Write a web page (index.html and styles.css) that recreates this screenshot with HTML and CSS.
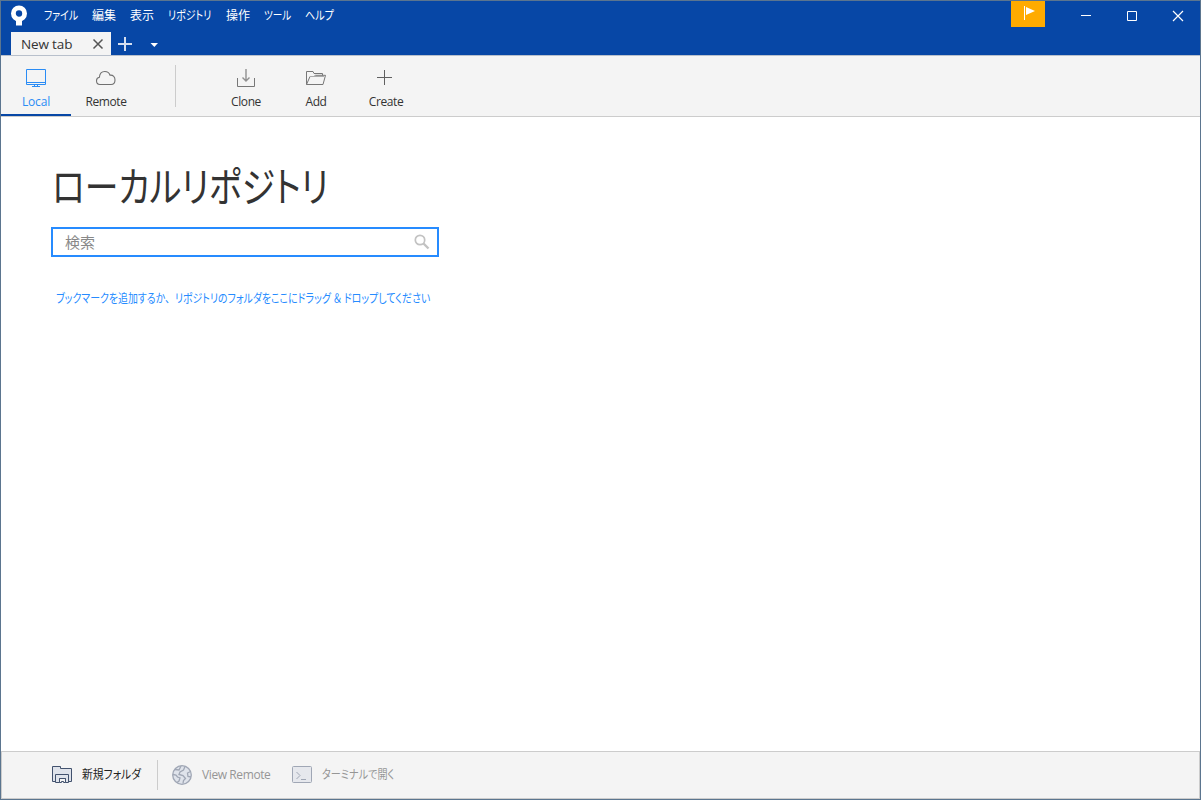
FILE: index.html
```html
<!DOCTYPE html>
<html lang="ja">
<head>
<meta charset="UTF-8" />
<meta name="viewport" content="width=device-width, initial-scale=1" />
<title>New tab</title>
<link rel="stylesheet" href="styles.css">
</head>
<body>
<div class="window">
  <header class="titlebar">
    <div class="menubar">
      <svg class="logo" width="18" height="22" viewBox="0 0 18 22">
        <circle cx="9" cy="8.500" r="5.600" fill="none" stroke="#fff" stroke-width="4.800"/>
        <path d="M6 14h6v6.500H6z" fill="#fff"/>
      </svg>
      <nav class="menu">
        <span class="w34"><b class="kana file">ファイル</b></span>
        <span class="w24">編集</span>
        <span class="w24">表示</span>
        <span class="w44"><b class="kana repo">リポジトリ</b></span>
        <span class="w24">操作</span>
        <span class="w27"><b class="kana tools">ツール</b></span>
        <span class="w29"><b class="kana help">ヘルプ</b></span>
      </nav>
      <div class="flag">
        <svg width="34" height="26" viewBox="0 0 34 26"><path d="M13 5h1v14h-1z" fill="#fff"/><path d="M15 6l9 4-9 4z" fill="#fff"/></svg>
      </div>
      <div class="controls">
        <svg width="46" height="30" viewBox="0 0 46 30"><path d="M18 14.500h10" stroke="#fff"/></svg>
        <svg width="46" height="30" viewBox="0 0 46 30"><path d="M18.500 10.500h9v9h-9z" fill="none" stroke="#fff"/></svg>
        <svg width="46" height="30" viewBox="0 0 46 30"><path d="M18 10l10 10M28 10L18 20" stroke="#fff" stroke-width="1.200"/></svg>
      </div>
    </div>
    <div class="tabs">
      <div class="tab"><span>New tab</span>
        <svg width="12" height="12" viewBox="0 0 12 12"><path d="M1.500 1.500l9 9M10.500 1.500l-9 9" stroke="#555" stroke-width="1.500"/></svg>
      </div>
      <svg class="plus" width="14" height="14" viewBox="0 0 14 14"><path d="M0 7h14M7 0v14" stroke="#d5dff0" stroke-width="2"/></svg>
      <svg class="caret" width="8" height="4" viewBox="0 0 8 4"><path d="M.5 0h7.500L4.300 4z" fill="#fff"/></svg>
    </div>
  </header>

  <div class="toolbar">
    <div class="tool active">
      <svg width="22" height="20" viewBox="0 0 22 20" fill="none" stroke="#2a8cf5"><path d="M1.500 1.500h19v15h-19zM1.500 14.500h19M7 18.500h8M9.500 16v2M12.500 16v2"/></svg>
      <span>Local</span>
    </div>
    <div class="tool">
      <svg width="22" height="20" viewBox="0 0 22 20" fill="none" stroke="#707070" stroke-width="1.100"><path d="M5 16.500C2.800 16.500 1.500 15 1.500 12.800c0-2 1.200-3.300 2.900-3.600C4.700 5.800 6.800 3.500 9.800 3.500c2.500 0 4.400 1.400 5.200 3.700 3.200-.3 5 1.800 5 4.700 0 2.800-1.500 4.600-4 4.600z"/></svg>
      <span>Remote</span>
    </div>
    <div class="separator"></div>
    <div class="tool">
      <svg width="22" height="20" viewBox="0 0 22 20" fill="none" stroke="#777"><path d="M2.500 10v8.500h17V10"/><path d="M11 1v12M7.500 9.500L11 13l3.500-3.500" stroke-width="1.400" stroke="#909090"/></svg>
      <span>Clone</span>
    </div>
    <div class="tool">
      <svg width="22" height="20" viewBox="0 0 22 20" fill="none" stroke="#777"><path d="M1.500 16.500v-13H8l1 2h8.500v2M1.500 16.500l3.500-8h4l1.500-1.200h10l-2.500 9.200z"/><path d="M5 8.500h14" stroke="#aaa"/></svg>
      <span>Add</span>
    </div>
    <div class="tool">
      <svg width="22" height="20" viewBox="0 0 22 20" stroke="#606060"><path d="M2 9.500h15M9.500 2v15"/></svg>
      <span>Create</span>
    </div>
  </div>

  <main class="content">
    <h1><span class="kana heading">ローカルリポジトリ</span></h1>
    <div class="search">
      <span>検索</span>
      <svg width="16" height="16" viewBox="0 0 16 16" fill="none" stroke="#c2c2c2"><circle cx="6" cy="6" r="4.700" stroke-width="1.700"/><path d="M9.500 9.500l5 5" stroke-width="2.400"/></svg>
    </div>
    <p class="hint"><span class="kana">ブックマークを追加するか<i>、</i>リポジトリのフォルダをここにドラッグ<i class="amp">＆</i>ドロップしてください</span></p>
  </main>

  <footer class="footer">
    <div class="action folder">
      <svg width="20" height="18" viewBox="0 0 20 18" fill="#dfe3eb" stroke="#42526e"><path d="M.5 15.500V.5h8v2h11v13z"/><path d="M3.500 16.500v-8h13v8h-3v-4h-6v4z"/><path d="M7.500 16.500v-4h6v4h-2v-1h-2v1z" fill="#f4f4f4"/></svg>
      <span><b class="kana newfolder">新規フォルダ</b></span>
    </div>
    <div class="action remote">
      <svg width="20" height="20" viewBox="0 0 20 20" fill="#dfe3eb" stroke="#a0a7b5"><circle cx="10" cy="10" r="9.300" stroke-width="1.300"/><path d="M3 4.500l4 .5L9 1M13 1.500L11.500 5 8 7l-1 2.500 4 1 2.500 3-2 2-.5 3M1 9.500l3 .5 1.500 2L8 13l-1 3-2 1.500M18.500 6.500l-3 1.500.5 3.500 3 .5" fill="none" stroke-width="1.300"/></svg>
      <span>View Remote</span>
    </div>
    <div class="action terminal">
      <svg width="20" height="17" viewBox="0 0 20 17" fill="#e6e8ed" stroke="#a0a7b5"><rect x=".5" y=".5" width="19" height="16" rx="1"/><path d="M4.500 6l3.500 3.500L4.500 13M9 13.500h5" fill="none"/></svg>
      <span><b class="kana term">ターミナルで開く</b></span>
    </div>
  </footer>
</div>
</body>
</html>
```
FILE: styles.css
```css
* {
  box-sizing: border-box;
}
body {
  margin: 0;
  font-family: "Open Sans", "Noto Sans CJK JP", sans-serif;
  font-size: 12px;
  color: #333;
}
svg {
  display: block;
  flex: none;
}
.window {
  display: flex;
  flex-direction: column;
  width: 1201px;
  height: 800px;
  border: 1px solid #5b758f;
  background: #fff;
  overflow: hidden;
}
.kana {
  display: inline-block;
  font-weight: 400;
  font-feature-settings: "palt";
  transform-origin: 0 50%;
  white-space: nowrap;
}
.titlebar {
  height: 54px;
  background: #0747a6;
}
.menubar {
  display: flex;
  height: 31px;
  padding-left: 9px;
  color: #fff;
}
.logo {
  margin-top: 4px;
}
.menu {
  display: flex;
  gap: 14px;
  margin-left: 16px;
  line-height: 29px;
  white-space: nowrap;
}
.w24 { width: 24px; }
.w27 { width: 27px; }
.w29 { width: 29px; }
.w34 { width: 34px; }
.w44 { width: 44px; }
.file { transform: scaleX(0.82); }
.repo { transform: scaleX(0.83); }
.tools { transform: scaleX(0.8); }
.help { transform: scaleX(0.84); }
.flag {
  width: 34px;
  height: 26px;
  margin-left: auto;
  background: #ffab00;
}
.controls {
  display: flex;
  margin-left: 18px;
  margin-right: -1px;
}
.tabs {
  display: flex;
  height: 23px;
  padding-left: 10px;
}
.tab {
  display: flex;
  justify-content: space-between;
  align-items: center;
  width: 100px;
  padding: 0 7px 0 10px;
  background: #f4f4f4;
  font-size: 13.500px;
  letter-spacing: -0.15px;
}
.plus {
  margin: 5px 0 0 7px;
}
.caret {
  margin: 11px 0 0 18px;
}
.toolbar {
  display: flex;
  height: 62px;
  border-top: 1px solid #b8c0cc;
  border-bottom: 1px solid #ccc;
  background: #f4f4f4;
}
.toolbar .tool {
  display: flex;
  flex-direction: column;
  align-items: center;
  width: 70px;
  padding-top: 12px;
  line-height: 16px;
  letter-spacing: -0.4px;
}
.toolbar .tool span {
  margin-top: 6px;
}
.toolbar .active {
  color: #2a8cf5;
  letter-spacing: -0.2px;
  border-bottom: 2px solid #0747a6;
}
.separator {
  width: 1px;
  height: 42px;
  margin: 9px 35px 0 34px;
  background: #ccc;
}
.content {
  flex: 1;
  padding: 40px 50px 0;
}
h1 {
  margin: 0;
  padding-left: 1px;
  height: 70px;
  font-size: 41px;
  font-weight: 400;
  line-height: 58px;
}
.heading {
  transform: scaleX(0.825);
}
.search {
  display: flex;
  justify-content: space-between;
  align-items: center;
  width: 388px;
  height: 30px;
  padding: 0 7px 0 12px;
  border: 2px solid #268bff;
  color: #888;
  font-size: 15px;
}
.search span {
  margin-top: -2px;
}
.hint {
  margin: 32px 0 0 5px;
  line-height: 20px;
  color: #268bff;
}
.hint .kana {
  transform: scaleX(0.825);
}
.hint i {
  margin-right: 6px;
  font-style: normal;
}
.hint .amp {
  margin: 0 3px;
}
.footer {
  display: flex;
  align-items: center;
  height: 48px;
  padding-left: 50px;
  border: 1px solid #ccc;
  background: #f4f4f4;
}
.action {
  display: flex;
  align-items: center;
  gap: 10px;
  color: #969696;
  white-space: nowrap;
}
.action span {
  margin-top: -2px;
}
.folder {
  width: 106px;
  height: 30px;
  border-right: 1px solid #ccc;
  color: #222;
}
.remote {
  width: 120px;
  margin-left: 14px;
  letter-spacing: -0.4px;
}
.terminal svg {
  margin-top: -1px;
}
.newfolder { transform: scaleX(0.9); }
.term { transform: scaleX(0.84); }
```
